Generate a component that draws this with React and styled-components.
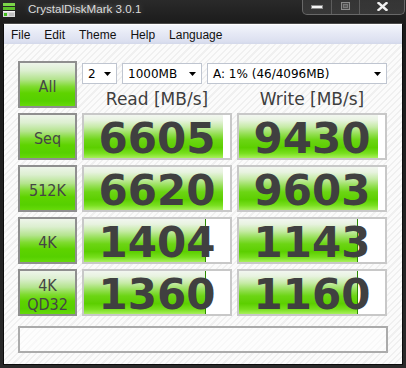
import React from 'react';
import styled, { createGlobalStyle } from 'styled-components';

const Global = createGlobalStyle`
  html, body { margin: 0; padding: 0; background: #1e1e1e; }
  body { width: 406px; height: 368px; overflow: hidden; }
`;

const Window = styled.div`
  width: 406px;
  height: 368px;
  box-sizing: border-box;
  padding: 0 3px 3px 3px;
  background: linear-gradient(#2a2a2a, #1b1b1b 24px, #222 60%, #2a2a2a);
  display: flex;
  flex-direction: column;
`;

const TitleBar = styled.div`
  height: 23px;
  flex: none;
  display: flex;
  align-items: flex-start;
`;

const AppIcon = styled.svg`
  margin-top: 3px;
  flex: none;
`;

const Title = styled.span`
  margin-left: 9px;
  margin-top: 2px;
  padding: 0 4px;
  margin-right: -4px;
  font-family: "Liberation Sans", Arial, sans-serif;
  font-size: 11.6px;
  line-height: 14px;
  color: #dcdcdc;
  text-shadow: 0 0 6px rgba(255, 255, 255, 0.25);
  background: radial-gradient(ellipse at center, rgba(255,255,255,0.10), rgba(255,255,255,0) 70%);
`;

const CaptionGroup = styled.div`
  margin-left: auto;
  margin-right: -2px;
  display: flex;
  height: 15px;
  box-sizing: border-box;
  border: 1px solid #686868;
  border-top: none;
  border-radius: 0 0 5px 5px;
  overflow: hidden;
  background: linear-gradient(rgba(255,255,255,0.05), rgba(255,255,255,0.1));
`;

const CaptionButton = styled.div`
  width: ${p => p.$w}px;
  display: flex;
  align-items: flex-start;
  justify-content: center;
  padding-top: ${p => p.$top}px;
  box-sizing: border-box;
  & + & { border-left: 1px solid #5c5c5c; }
`;

const Client = styled.div`
  flex: 1;
  display: flex;
  flex-direction: column;
  border: 1px solid #0c0c0c;
  border-top-color: #4a4a4a;
  background: repeating-linear-gradient(135deg, #fbfbfb 0px, #fbfbfb 3px, #f0f0f0 3px, #f0f0f0 4.5px);
`;

const MenuBar = styled.div`
  height: 20px;
  flex: none;
  display: flex;
  align-items: center;
  gap: 14px;
  padding-left: 7px;
  background: linear-gradient(#f3f5fb, #e6e9f5 45%, #dce0f0 85%, #d3d8ea);
  border-top: 1px solid #fff;
  box-sizing: border-box;
`;

const MenuItem = styled.span`
  font-family: "Liberation Sans", Arial, sans-serif;
  font-size: 12px;
  color: #111;
`;

const Body = styled.div`
  padding: 17px 14px 11px 14px;
  display: flex;
  flex-direction: column;
`;

const Grid = styled.div`
  display: grid;
  grid-template-columns: 59px 150px 150px;
  grid-auto-rows: 47px;
  gap: 5px;
`;

const LabelBox = styled.div`
  box-sizing: border-box;
  border: 2px solid #8f8f8f;
  background: linear-gradient(#eef5ea 0%, #dcefd0 18%, #b4e48e 38%, #7edb2e 55%, #5ed300 70%, #56d000 88%, #66da0a 100%);
  display: flex;
  flex-direction: column;
  align-items: center;
  justify-content: center;
  padding-top: 4px;
  font-family: "DejaVu Sans Condensed", "Liberation Sans", sans-serif;
  font-size: 16px;
  line-height: 19px;
  color: #454545;
`;

const Controls = styled.div`
  grid-column: 2 / 4;
  display: flex;
  flex-direction: column;
`;

const SelectRow = styled.div`
  display: flex;
  gap: 5px;
  margin-top: 2px;
`;

const Select = styled.div`
  ${p => (p.$w ? `width: ${p.$w}px;` : 'flex: 1;')}
  height: 21px;
  box-sizing: border-box;
  border: 1px solid #bfc5d0;
  background: #fff;
  display: flex;
  align-items: center;
  justify-content: space-between;
  padding: 0 5px 0 5px;
  font-family: "DejaVu Sans", Verdana, sans-serif;
  font-size: 12px;
  color: #000;
`;

const Headers = styled.div`
  display: grid;
  grid-template-columns: 150px 150px;
  gap: 5px;
  margin-top: 5px;
`;

const Header = styled.div`
  text-align: center;
  font-family: "DejaVu Sans", Verdana, sans-serif;
  font-size: 17px;
  line-height: 20px;
  color: #3e3e3e;
`;

const ValueBox = styled.div`
  position: relative;
  box-sizing: border-box;
  border: 2px solid #c8c8c8;
  background: #fff;
`;

const Fill = styled.div`
  position: absolute;
  left: 0;
  top: 0;
  bottom: 0;
  box-sizing: border-box;
  background: linear-gradient(#f2f6f0 0%, #e8f3e0 12%, #c6eba6 28%, #94df54 44%, #6cd514 58%, #5ccf00 76%, #78df1e 89%, #a8f05c 100%);
  border-right: ${p => (p.$edge ? '1px solid #2c8a00' : 'none')};
`;

const Value = styled.div`
  position: relative;
  margin-top: 6px;
  text-align: center;
  font-family: "DejaVu Sans", Verdana, sans-serif;
  font-weight: bold;
  font-size: 42px;
  line-height: 36px;
  color: #404040;
`;

const CommentBox = styled.div`
  margin-top: 10px;
  height: 27px;
  box-sizing: border-box;
  border: 2px solid #ababab;
  background: rgba(255, 255, 255, 0.5);
`;

const Arrow = () => (
  <svg width="7" height="4" viewBox="0 0 7 4"><polygon points="0,0 7,0 3.5,4" fill="#000" /></svg>
);

const rows = [
  { label: ['Seq'], read: '6605', rw: 139, redge: false, write: '9430', ww: 139, wedge: false },
  { label: ['512K'], read: '6620', rw: 139, redge: false, write: '9603', ww: 139, wedge: false },
  { label: ['4K'], read: '1404', rw: 122, redge: true, write: '1143', ww: 119, wedge: true },
  { label: ['4K', 'QD32'], read: '1360', rw: 122, redge: true, write: '1160', ww: 119, wedge: true },
];

export default function App() {
  return (
    <>
      <Global />
      <Window>
        <TitleBar>
          <AppIcon width="12" height="15" viewBox="0 0 12 15">
            <rect x="0" y="0" width="12" height="3" fill="#7cd64a" />
            <rect x="0" y="4" width="12" height="3" fill="#5cbf2a" />
            <rect x="0" y="8" width="12" height="6" fill="#d8d8d8" />
            <rect x="0" y="8" width="12" height="1" fill="#f4f4f4" />
            <rect x="1" y="10" width="3" height="3" fill="#3fbf1a" />
            <rect x="6" y="10" width="5" height="3" fill="#bdbdbd" />
          </AppIcon>
          <Title>CrystalDiskMark 3.0.1</Title>
          <CaptionGroup>
            <CaptionButton $w={28} $top={5}>
              <svg width="12" height="4" viewBox="0 0 12 4">
                <rect x="0.5" y="0.5" width="11" height="3" fill="#f4f4f4" stroke="#8a8a8a" strokeWidth="1" />
              </svg>
            </CaptionButton>
            <CaptionButton $w={28} $top={2}>
              <svg width="9" height="8" viewBox="0 0 9 8">
                <rect x="0.5" y="0.5" width="8" height="7" fill="#4a4a4a" stroke="#8c8c8c" strokeWidth="1" />
                <rect x="2.5" y="2.5" width="4" height="3" fill="#5e5e5e" stroke="#7a7a7a" strokeWidth="1" />
              </svg>
            </CaptionButton>
            <CaptionButton $w={45} $top={2}>
              <svg width="11" height="9" viewBox="0 0 11 9">
                <path d="M1.5 1 L9.5 8 M9.5 1 L1.5 8" stroke="#f0f0f0" strokeWidth="2.4" strokeLinecap="square" />
              </svg>
            </CaptionButton>
          </CaptionGroup>
        </TitleBar>
        <Client>
          <MenuBar>
            <MenuItem>File</MenuItem>
            <MenuItem>Edit</MenuItem>
            <MenuItem>Theme</MenuItem>
            <MenuItem>Help</MenuItem>
            <MenuItem>Language</MenuItem>
          </MenuBar>
          <Body>
            <Grid>
              <LabelBox>All</LabelBox>
              <Controls>
                <SelectRow>
                  <Select $w={35}><span>2</span><Arrow /></Select>
                  <Select $w={80}><span>1000MB</span><Arrow /></Select>
                  <Select><span>A: 1% (46/4096MB)</span><Arrow /></Select>
                </SelectRow>
                <Headers>
                  <Header>Read [MB/s]</Header>
                  <Header>Write [MB/s]</Header>
                </Headers>
              </Controls>
              {rows.map(r => (
                <React.Fragment key={r.label.join('-')}>
                  <LabelBox>
                    {r.label.map(l => <span key={l}>{l}</span>)}
                  </LabelBox>
                  <ValueBox>
                    <Fill $edge={r.redge} style={{ width: r.rw }} />
                    <Value>{r.read}</Value>
                  </ValueBox>
                  <ValueBox>
                    <Fill $edge={r.wedge} style={{ width: r.ww }} />
                    <Value>{r.write}</Value>
                  </ValueBox>
                </React.Fragment>
              ))}
            </Grid>
            <CommentBox />
          </Body>
        </Client>
      </Window>
    </>
  );
}
